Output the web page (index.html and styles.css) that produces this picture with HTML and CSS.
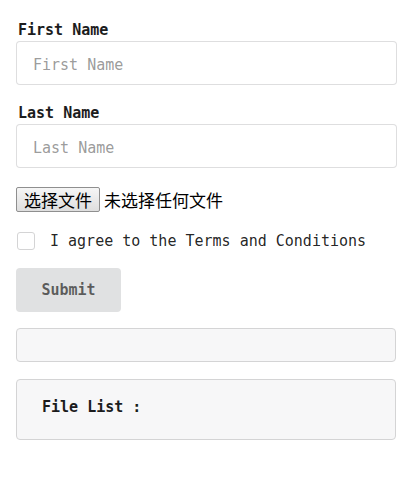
FILE: index.html
```html
<!DOCTYPE html>
<html>
<head>
<meta charset="utf-8">
<link rel="stylesheet" href="styles.css">
</head>
<body>
<form class="form">
  <div class="field">
    <label class="label">First Name</label>
    <input class="text-input" type="text" placeholder="First Name">
  </div>
  <div class="field">
    <label class="label">Last Name</label>
    <input class="text-input" type="text" placeholder="Last Name">
  </div>
  <div class="file-row">
    <button type="button" class="file-btn">选择文件</button>
    <span class="file-status">未选择任何文件</span>
  </div>
  <label class="check-row">
    <span class="check-box"></span>
    <span class="check-text">I agree to the Terms and Conditions</span>
  </label>
  <div class="submit-row">
    <button type="button" class="submit-btn">Submit</button>
  </div>
  <div class="box box-empty"></div>
  <div class="box box-list">File List :</div>
</form>
</body>
</html>
```
FILE: styles.css
```css
* { box-sizing: border-box; }
html, body { margin: 0; padding: 0; background: #fff; }
body {
  font-family: "DejaVu Sans Mono", monospace;
  font-size: 15px;
  color: rgba(0,0,0,0.87);
}
.form {
  width: 381px;
  margin-left: 16px;
  padding-top: 20px;
  display: flex;
  flex-direction: column;
}
.field {
  display: flex;
  flex-direction: column;
  margin-bottom: 18px;
}
.label {
  font-weight: bold;
  color: #1b1c1d;
  line-height: 18px;
  padding-top: 1px;
  margin: 0 0 2px 2px;
}
.text-input {
  height: 44px;
  border: 1px solid rgba(34,36,38,0.15);
  border-radius: 4px;
  padding: 3px 16px 0;
  font-family: "DejaVu Sans Mono", monospace;
  font-size: 15px;
  color: rgba(0,0,0,0.87);
  outline: none;
  width: 100%;
}
.text-input::placeholder { color: rgba(140,140,140,0.87); }
.file-row {
  display: flex;
  align-items: center;
  margin-top: 1px;
  height: 25px;
  font-family: "Noto Sans CJK SC", sans-serif;
}
.file-btn {
  font-family: "Noto Sans CJK SC", sans-serif;
  font-size: 17px;
  height: 25px;
  line-height: 21px;
  padding: 0 7px;
  border: 1px solid #8f8f8f;
  border-radius: 2px;
  background: linear-gradient(#f6f6f6, #dedede);
  color: #000;
  margin: 0;
  width: 84px;
}
.file-status {
  font-size: 17px;
  color: #000;
  margin-left: 4px;
}
.check-row {
  display: flex;
  align-items: center;
  margin-top: 19px;
  height: 18px;
  padding-top: 1px;
  padding-left: 1px;
}
.check-box {
  width: 18px;
  height: 18px;
  border: 1px solid #d4d4d5;
  border-radius: 3px;
  background: #fff;
  flex: none;
}
.check-text {
  margin-left: 15px;
  color: rgba(0,0,0,0.87);
}
.submit-row {
  display: flex;
  margin-top: 19px;
}
.submit-btn {
  font-family: "DejaVu Sans Mono", monospace;
  font-size: 15px;
  font-weight: bold;
  color: rgba(0,0,0,0.6);
  background: #e0e1e2;
  border: none;
  border-radius: 4px;
  width: 105px;
  height: 44px;
  padding: 0;
}
.box {
  border: 1px solid #d4d4d5;
  border-radius: 4px;
  background: #f7f7f8;
  width: 380px;
}
.box-empty {
  height: 34px;
  margin-top: 16px;
}
.box-list {
  height: 61px;
  margin-top: 17px;
  padding: 18px 0 0 25px;
  line-height: 18px;
  font-weight: bold;
  color: #1b1c1d;
}
```
